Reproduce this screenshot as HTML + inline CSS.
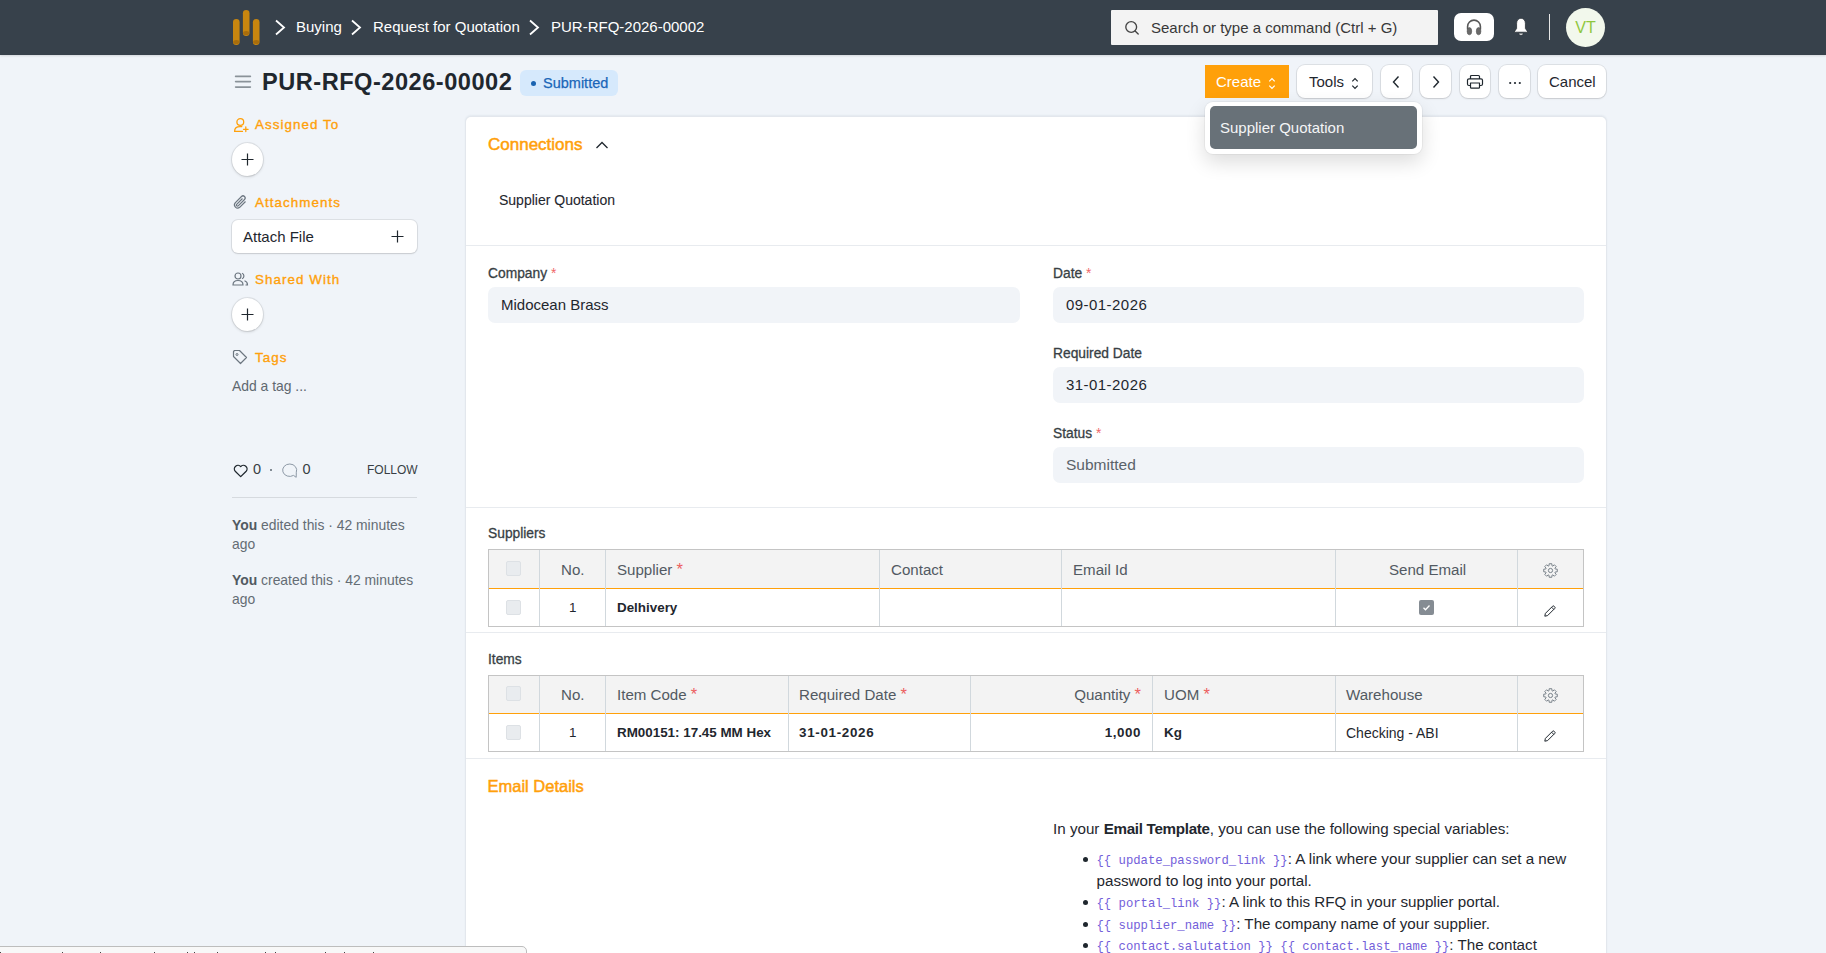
<!DOCTYPE html>
<html><head><meta charset="utf-8">
<style>
*{box-sizing:border-box;margin:0;padding:0}
html,body{width:1826px;height:953px;overflow:hidden}
body{background:#f0f4f9;font-family:"Liberation Sans",sans-serif;color:#1f272e;position:relative;font-size:13px}
.abs{position:absolute}
.nav{left:0;top:0;width:1826px;height:55px;background:#37414b;box-shadow:0 1px 2px rgba(0,0,0,.12)}
.crumb{color:#fff;font-size:15px;top:18px;white-space:nowrap}
.search{left:1111px;top:10px;width:327px;height:35px;background:#f3f3f3;border-radius:1px}
.search span{position:absolute;left:40px;top:9px;font-size:15px;color:#383838}
.btn{position:absolute;background:#fff;border-radius:8px;box-shadow:0 0 0 1px rgba(0,0,0,.08),0 1px 2px rgba(0,0,0,.1);font-size:14px;color:#1f272e;text-align:center}
.side-h{font-size:13.4px;color:#ffa00a;letter-spacing:1.05px;left:255px;white-space:nowrap;-webkit-text-stroke:.35px #ffa00a}
.circ{position:absolute;width:31px;height:33px;border-radius:50%;background:#fff;box-shadow:0 0 0 1px rgba(0,0,0,.07),0 1px 3px rgba(0,0,0,.15)}
.card{left:466px;top:117px;width:1140px;height:900px;background:#fff;border-radius:5px;box-shadow:0 0 0 1px #e3e7ed,0 -1px 2px 1px rgba(40,60,90,.06)}
.lbl{font-size:13.8px;color:#383f45;white-space:nowrap;-webkit-text-stroke:.3px #383f45}
.lbl .req{-webkit-text-stroke:0;color:#f06868}
.th1{font-size:15.1px;color:#525a62}
.td1{font-size:13.4px;color:#1f272e}
.b{font-weight:bold}
.dt{color:#5a6269;letter-spacing:.45px}
.req{color:#ec5f5f}
.th1 .req{font-size:16.5px;position:relative;top:0px;line-height:0}
.inp{position:absolute;background:#f1f4f8;border-radius:7px;height:36px;font-size:15px;color:#1f272e;padding:9px 13px;white-space:nowrap}
.hr{position:absolute;left:466px;width:1140px;height:1px;background:#e8ebef}
.tbl{position:absolute;left:488px;width:1096px;border:1px solid #c8cbce;border-radius:0}
.th{position:absolute;top:0;height:38px;background:#f3f3f3}
.cell{position:absolute;white-space:nowrap}
.vl{position:absolute;width:1px;background:#d1d8dd}
code{font-family:"Liberation Mono",monospace;font-size:12.25px;color:#7360da;line-height:0}
.bul{position:absolute;left:30px;top:9px;width:5px;height:5px;border-radius:50%;background:#1f272e}
.cb{position:absolute;width:15px;height:15px;background:#e9ecef;border:1px solid #dde1e5;border-radius:2px}
</style></head><body>
<!-- navbar -->
<div class="abs nav"></div>
<svg class="abs" style="left:232px;top:9px" width="30" height="38" viewBox="0 0 30 38">
<rect x="1" y="10" width="6.6" height="26" rx="3.3" fill="#c8860f"/><ellipse cx="4.3" cy="33" rx="3.1" ry="2" fill="#a86d0c"/>
<rect x="10.9" y="1" width="6.6" height="26" rx="3.3" fill="#c8860f"/><ellipse cx="14.2" cy="24" rx="3.1" ry="2" fill="#a86d0c"/>
<rect x="20.9" y="10" width="6.6" height="26" rx="3.3" fill="#c8860f"/><ellipse cx="24.2" cy="33" rx="3.1" ry="2" fill="#a86d0c"/>
</svg>
<svg class="abs" style="left:273.5px;top:19px" width="12" height="17" viewBox="0 0 12 17"><path d="M2 1.5 L10 8.5 L2 15.5" stroke="#fff" stroke-width="1.8" fill="none"/></svg>
<div class="abs crumb" style="left:296px">Buying</div>
<svg class="abs" style="left:350px;top:19px" width="12" height="17" viewBox="0 0 12 17"><path d="M2 1.5 L10 8.5 L2 15.5" stroke="#fff" stroke-width="1.8" fill="none"/></svg>
<div class="abs crumb" style="left:373px">Request for Quotation</div>
<svg class="abs" style="left:528px;top:19px" width="12" height="17" viewBox="0 0 12 17"><path d="M2 1.5 L10 8.5 L2 15.5" stroke="#fff" stroke-width="1.8" fill="none"/></svg>
<div class="abs crumb" style="left:551px">PUR-RFQ-2026-00002</div>
<div class="abs search">
<svg class="abs" style="left:13px;top:10px" width="16" height="16" viewBox="0 0 16 16"><circle cx="7.2" cy="7" r="5.4" stroke="#444" stroke-width="1.35" fill="none"/><path d="M11.1 10.9 L14.2 14" stroke="#444" stroke-width="1.35" stroke-linecap="round"/></svg>
<span>Search or type a command (Ctrl + G)</span></div>
<div class="abs" style="left:1454px;top:13px;width:40px;height:28px;background:#fff;border-radius:7px"></div>
<svg class="abs" style="left:1464px;top:17px" width="20" height="20" viewBox="0 0 20 20"><path d="M3.6 12.5 V9.5 a6.4 6.4 0 0 1 12.8 0 V12.5" stroke="#585858" stroke-width="1.6" fill="none"/><ellipse cx="5.4" cy="14.2" rx="2.3" ry="3.6" fill="#6a6a6a" stroke="#555" stroke-width=".6"/><ellipse cx="14.6" cy="14.2" rx="2.3" ry="3.6" fill="#6a6a6a" stroke="#555" stroke-width=".6"/></svg>
<svg class="abs" style="left:1512px;top:17px" width="18" height="20" viewBox="0 0 18 20"><path d="M9 1.3 C6.3 1.3 4.6 3.6 4.6 6.5 V11.5 L2 15.2 H16 L13.4 11.5 V6.5 C13.4 3.6 11.7 1.3 9 1.3z" fill="#fff" stroke="#1d242b" stroke-width=".7" stroke-linejoin="round"/><path d="M6.8 16.3 h4.4 a2.2 1.9 0 0 1 -4.4 0z" fill="#fff" stroke="#1d242b" stroke-width=".5"/></svg>
<div class="abs" style="left:1549px;top:14px;width:1px;height:26px;background:#e6e6e6"></div>
<div class="abs" style="left:1566px;top:8px;width:39px;height:39px;border-radius:50%;background:#f2f8ec;color:#8fc73e;font-size:16px;text-align:center;line-height:39px">VT</div>

<!-- page head -->
<svg class="abs" style="left:233px;top:75px" width="20" height="14" viewBox="0 0 20 14"><path d="M2.6 1.4H17.4M2.6 6.6H17.4M2.6 12.1H17.4" stroke="#8a9299" stroke-width="1.6" stroke-linecap="round"/></svg>
<div class="abs" style="left:262px;top:68.5px;font-size:23.6px;letter-spacing:.5px;font-weight:bold;color:#1f272e;white-space:nowrap">PUR-RFQ-2026-00002</div>
<div class="abs" style="left:520px;top:70px;width:98px;height:26px;background:#d6e9fc;border-radius:6px"></div>
<div class="abs" style="left:531px;top:80.5px;width:5px;height:5px;border-radius:50%;background:#1a63b0"></div>
<div class="abs" style="left:543px;top:75px;font-size:14.5px;color:#1a66b8;white-space:nowrap;-webkit-text-stroke:.25px #1a66b8">Submitted</div>

<div class="abs" style="left:1205px;top:65px;width:84px;height:33px;background:#ffa00a;color:#fff;font-size:14px"><span class="abs" style="left:11px;top:8px;font-size:15px">Create</span>
<svg class="abs" style="left:63px;top:12px" width="8" height="13" viewBox="0 0 8 13"><path d="M1.3 4.3 L4 1.5 L6.7 4.3 M1.3 8.7 L4 11.5 L6.7 8.7" stroke="#fff" stroke-width="1.2" fill="none"/></svg></div>
<div class="btn" style="left:1297px;top:65px;width:75px;height:33px"><span class="abs" style="left:12px;top:8px;font-size:15px">Tools</span>
<svg class="abs" style="left:54px;top:12px" width="8" height="13" viewBox="0 0 8 13"><path d="M1.3 4.3 L4 1.5 L6.7 4.3 M1.3 8.7 L4 11.5 L6.7 8.7" stroke="#1f272e" stroke-width="1.2" fill="none"/></svg></div>
<div class="btn" style="left:1381px;top:65px;width:31px;height:33px"><svg class="abs" style="left:10px;top:10px" width="10" height="14" viewBox="0 0 10 14"><path d="M7.5 1.5 L2.5 7 L7.5 12.5" stroke="#1f272e" stroke-width="1.4" fill="none"/></svg></div>
<div class="btn" style="left:1420px;top:65px;width:31px;height:33px"><svg class="abs" style="left:11px;top:10px" width="10" height="14" viewBox="0 0 10 14"><path d="M2.5 1.5 L7.5 7 L2.5 12.5" stroke="#1f272e" stroke-width="1.4" fill="none"/></svg></div>
<div class="btn" style="left:1460px;top:65px;width:30px;height:33px"><svg class="abs" style="left:6px;top:9px" width="18" height="16" viewBox="0 0 18 16"><path d="M4.5 4.8V2.5a1 1 0 0 1 1-1h7a1 1 0 0 1 1 1v2.3M4.5 11.5H3a1.5 1.5 0 0 1-1.5-1.5V6.3a1.5 1.5 0 0 1 1.5-1.5h12a1.5 1.5 0 0 1 1.5 1.5V10a1.5 1.5 0 0 1-1.5 1.5h-1.5M4.5 9h9v4.2a1 1 0 0 1-1 1h-7a1 1 0 0 1-1-1z" stroke="#1f272e" stroke-width="1.2" fill="none" stroke-linejoin="round"/></svg></div>
<div class="btn" style="left:1499px;top:65px;width:31px;height:33px"><svg class="abs" style="left:9px;top:16px" width="14" height="4" viewBox="0 0 14 4"><circle cx="2.2" cy="2" r="1.1" fill="#1f272e"/><circle cx="7" cy="2" r="1.1" fill="#1f272e"/><circle cx="11.8" cy="2" r="1.1" fill="#1f272e"/></svg></div>
<div class="btn" style="left:1538px;top:65px;width:68px;height:33px"><span class="abs" style="left:11px;top:8px;font-size:15px">Cancel</span></div>

<!-- sidebar -->
<svg class="abs" style="left:232px;top:116px" width="18" height="18" viewBox="0 0 18 18"><circle cx="8.3" cy="6" r="3.4" stroke="#ffa00a" stroke-width="1.3" fill="none"/><path d="M10.5 15.4H2.6C2.6 12.4 4.8 10.6 8 10.6H9.8M13.8 11v4.6M11.5 13.3h4.6" stroke="#ffa00a" stroke-width="1.3" fill="none" stroke-linecap="round" stroke-linejoin="round"/></svg>
<div class="abs side-h" style="top:117px">Assigned To</div>
<div class="circ" style="left:231.5px;top:143px"><svg class="abs" style="left:8px;top:9px" width="15" height="15" viewBox="0 0 15 15"><path d="M7.5 1.5v12M1.5 7.5h12" stroke="#1f272e" stroke-width="1.2"/></svg></div>
<svg class="abs" style="left:232px;top:194px" width="16" height="16" viewBox="0 0 16 16"><path d="M13.5 7.5l-5.8 5.8a3.2 3.2 0 0 1-4.5-4.5l6.3-6.3a2.1 2.1 0 0 1 3 3L6.2 11.8a1 1 0 0 1-1.5-1.5L10.5 4.5" stroke="#6c7680" stroke-width="1.2" fill="none"/></svg>
<div class="abs side-h" style="top:195px">Attachments</div>
<div class="abs" style="left:232px;top:220px;width:185px;height:33px;background:#fff;border-radius:6px;box-shadow:0 0 0 1px rgba(0,0,0,.08),0 1px 2px rgba(0,0,0,.1)"><span class="abs" style="left:11px;top:8px;font-size:15px">Attach File</span>
<svg class="abs" style="left:158px;top:9px" width="15" height="15" viewBox="0 0 15 15"><path d="M7.5 1.5v12M1.5 7.5h12" stroke="#1f272e" stroke-width="1.2"/></svg></div>
<svg class="abs" style="left:232px;top:271px" width="17" height="16" viewBox="0 0 17 16"><circle cx="6" cy="5" r="3" stroke="#6c7680" stroke-width="1.2" fill="none"/><path d="M1 14c0-2.8 2.2-4.5 5-4.5s5 1.7 5 4.5zM10 2.2a3 3 0 0 1 0 5.6M12.5 9.8c1.8.6 3 2 3 4.2h-2" stroke="#6c7680" stroke-width="1.2" fill="none"/></svg>
<div class="abs side-h" style="top:272px">Shared With</div>
<div class="circ" style="left:231.5px;top:298px"><svg class="abs" style="left:8px;top:9px" width="15" height="15" viewBox="0 0 15 15"><path d="M7.5 1.5v12M1.5 7.5h12" stroke="#1f272e" stroke-width="1.2"/></svg></div>
<svg class="abs" style="left:232px;top:349px" width="16" height="16" viewBox="0 0 16 16"><path d="M1.5 2.5v5l7 7 6-6-7-7h-5z" stroke="#6c7680" stroke-width="1.2" fill="none" stroke-linejoin="round"/><circle cx="5" cy="5.5" r="1" stroke="#6c7680" stroke-width="1" fill="none"/></svg>
<div class="abs side-h" style="top:350px">Tags</div>
<div class="abs" style="left:232px;top:378px;font-size:13.9px;color:#5f6870">Add a tag ...</div>

<svg class="abs" style="left:232px;top:462px" width="18" height="17" viewBox="0 0 18 17"><path d="M8.7 14.6 L3.2 9.2 A3.4 3.4 0 0 1 8.7 4.6 A3.4 3.4 0 0 1 14.2 9.2 Z" stroke="#1f272e" stroke-width="1.3" fill="none" stroke-linejoin="round"/></svg>
<div class="abs" style="left:253px;top:461px;font-size:14.5px;color:#383f45">0</div>
<div class="abs" style="left:270px;top:469px;width:1.6px;height:1.6px;border-radius:50%;background:#6c7680"></div>
<svg class="abs" style="left:282px;top:462px" width="18" height="17" viewBox="0 0 18 17"><path d="M11.5 13.4 A7 6.2 0 1 1 14.3 10.2 L14.2 15.3 Z" stroke="#8d99a6" stroke-width="1" fill="none" stroke-linejoin="round"/></svg>
<div class="abs" style="left:302.5px;top:461px;font-size:14.5px;color:#383f45">0</div>
<div class="abs" style="left:367px;top:463px;font-size:12px;color:#383f45">FOLLOW</div>
<div class="abs" style="left:232px;top:497px;width:185px;height:1px;background:#d6dadf"></div>
<div class="abs" style="left:232px;top:515.5px;width:186px;font-size:13.9px;color:#646c74;line-height:19.8px"><b style="color:#525a62">You</b> edited this · 42 minutes ago</div>
<div class="abs" style="left:232px;top:570.5px;width:186px;font-size:13.9px;color:#646c74;line-height:19.8px"><b style="color:#525a62">You</b> created this · 42 minutes ago</div>

<!-- card -->
<div class="abs card"></div>
<div class="abs" style="left:488px;top:135px;font-size:17px;color:#ffa00a;-webkit-text-stroke:.5px #ffa00a;white-space:nowrap">Connections</div>
<svg class="abs" style="left:595px;top:139px" width="14" height="12" viewBox="0 0 14 12"><path d="M1.5 9 L7 3.5 L12.5 9" stroke="#1f272e" stroke-width="1.3" fill="none"/></svg>
<div class="abs" style="left:499px;top:192px;font-size:14px;color:#1f272e;-webkit-text-stroke:.1px #1f272e;white-space:nowrap">Supplier Quotation</div>
<div class="hr" style="top:245px"></div>

<div class="abs lbl" style="left:488px;top:265.5px">Company <span class="req">*</span></div>
<div class="inp" style="left:488px;top:287px;width:532px">Midocean Brass</div>
<div class="abs lbl" style="left:1053px;top:265.5px">Date <span class="req">*</span></div>
<div class="inp dt" style="left:1053px;top:287px;width:531px">09-01-2026</div>
<div class="abs lbl" style="left:1053px;top:345.5px">Required Date</div>
<div class="inp dt" style="left:1053px;top:367px;width:531px">31-01-2026</div>
<div class="abs lbl" style="left:1053px;top:425.5px">Status <span class="req">*</span></div>
<div class="inp" style="left:1053px;top:447px;width:531px;color:#5a6269;font-size:15.5px">Submitted</div>
<div class="hr" style="top:507px"></div>

<div class="abs lbl" style="left:488px;top:525.5px">Suppliers</div>
<!-- suppliers table -->
<div class="abs" style="left:488px;top:549px;width:1096px;height:78px;border:1px solid #c4c4c4;background:#fff"></div>
<div class="abs" style="left:489px;top:550px;width:1094px;height:38px;background:#f3f3f3"></div>
<div class="abs" style="left:489px;top:588px;width:1094px;height:1px;background:#ffa00a"></div>
<div class="vl" style="left:539px;top:550px;height:76px"></div>
<div class="vl" style="left:605px;top:550px;height:76px"></div>
<div class="vl" style="left:879px;top:550px;height:76px"></div>
<div class="vl" style="left:1061px;top:550px;height:76px"></div>
<div class="vl" style="left:1335px;top:550px;height:76px"></div>
<div class="vl" style="left:1517px;top:550px;height:76px"></div>
<div class="cb" style="left:506px;top:561px"></div>
<div class="cb" style="left:506px;top:600px"></div>
<div class="cell th1" style="left:561px;top:561px">No.</div>
<div class="cell th1" style="left:617px;top:561px">Supplier <span class="req">*</span></div>
<div class="cell th1" style="left:891px;top:561px">Contact</div>
<div class="cell th1" style="left:1073px;top:561px">Email Id</div>
<div class="cell th1" style="left:1389px;top:561px">Send Email</div>
<div class="cell td1" style="left:569px;top:600px">1</div>
<div class="cell td1 b" style="left:617px;top:600px">Delhivery</div>
<div class="abs" style="left:1419px;top:600px;width:15px;height:15px;background:#858c93;border-radius:2px"><svg class="abs" style="left:2px;top:2px" width="11" height="11" viewBox="0 0 11 11"><path d="M2.5 5.8 L4.5 7.8 L8.5 3.5" stroke="#fff" stroke-width="1.3" fill="none"/></svg></div>
<svg class="abs" style="left:1542px;top:562px" width="17" height="17" viewBox="0 0 17 17"><path d="M13.28 7.04 L15.27 7.18 L15.27 9.82 L13.28 9.96 L12.91 10.85 L14.22 12.36 L12.36 14.22 L10.85 12.91 L9.96 13.28 L9.82 15.27 L7.18 15.27 L7.04 13.28 L6.15 12.91 L4.64 14.22 L2.78 12.36 L4.09 10.85 L3.72 9.96 L1.73 9.82 L1.73 7.18 L3.72 7.04 L4.09 6.15 L2.78 4.64 L4.64 2.78 L6.15 4.09 L7.04 3.72 L7.18 1.73 L9.82 1.73 L9.96 3.72 L10.85 4.09 L12.36 2.78 L14.22 4.64 L12.91 6.15Z" stroke="#737c85" stroke-width=".95" fill="none" stroke-linejoin="round"/><circle cx="8.5" cy="8.5" r="2.1" stroke="#737c85" stroke-width=".95" fill="none"/></svg>
<svg class="abs" style="left:1543px;top:604px" width="14" height="14" viewBox="0 0 14 14"><path d="M1.8 12.2l.6-2.8L9.6 2.2a1 1 0 0 1 1.4 0l.8.8a1 1 0 0 1 0 1.4L4.6 11.6z M8.6 3.2l2.2 2.2" stroke="#1f272e" stroke-width="1" fill="none" stroke-linejoin="round"/></svg>
<div class="hr" style="top:632px"></div>

<div class="abs lbl" style="left:488px;top:651.5px">Items</div>
<!-- items table -->
<div class="abs" style="left:488px;top:675px;width:1096px;height:77px;border:1px solid #c4c4c4;background:#fff"></div>
<div class="abs" style="left:489px;top:676px;width:1094px;height:37px;background:#f3f3f3"></div>
<div class="abs" style="left:489px;top:713px;width:1094px;height:1px;background:#ffa00a"></div>
<div class="vl" style="left:539px;top:676px;height:75px"></div>
<div class="vl" style="left:605px;top:676px;height:75px"></div>
<div class="vl" style="left:788px;top:676px;height:75px"></div>
<div class="vl" style="left:970px;top:676px;height:75px"></div>
<div class="vl" style="left:1152px;top:676px;height:75px"></div>
<div class="vl" style="left:1335px;top:676px;height:75px"></div>
<div class="vl" style="left:1517px;top:676px;height:75px"></div>
<div class="cb" style="left:506px;top:686px"></div>
<div class="cb" style="left:506px;top:725px"></div>
<div class="cell th1" style="left:561px;top:686px">No.</div>
<div class="cell th1" style="left:617px;top:686px">Item Code <span class="req">*</span></div>
<div class="cell th1" style="left:799px;top:686px">Required Date <span class="req">*</span></div>
<div class="cell th1" style="left:990px;top:686px;width:151px;text-align:right">Quantity <span class="req">*</span></div>
<div class="cell th1" style="left:1164px;top:686px">UOM <span class="req">*</span></div>
<div class="cell th1" style="left:1346px;top:686px">Warehouse</div>
<div class="cell td1" style="left:569px;top:725px">1</div>
<div class="cell td1 b" style="left:617px;top:725px">RM00151: 17.45 MM Hex</div>
<div class="cell td1 b" style="left:799px;top:725px;letter-spacing:.69px">31-01-2026</div>
<div class="cell td1 b" style="left:990px;top:725px;width:151px;text-align:right;letter-spacing:.56px">1,000</div>
<div class="cell td1 b" style="left:1164px;top:725px">Kg</div>
<div class="cell td1" style="left:1346px;top:725px;font-size:14px">Checking - ABI</div>
<svg class="abs" style="left:1542px;top:687px" width="17" height="17" viewBox="0 0 17 17"><path d="M13.28 7.04 L15.27 7.18 L15.27 9.82 L13.28 9.96 L12.91 10.85 L14.22 12.36 L12.36 14.22 L10.85 12.91 L9.96 13.28 L9.82 15.27 L7.18 15.27 L7.04 13.28 L6.15 12.91 L4.64 14.22 L2.78 12.36 L4.09 10.85 L3.72 9.96 L1.73 9.82 L1.73 7.18 L3.72 7.04 L4.09 6.15 L2.78 4.64 L4.64 2.78 L6.15 4.09 L7.04 3.72 L7.18 1.73 L9.82 1.73 L9.96 3.72 L10.85 4.09 L12.36 2.78 L14.22 4.64 L12.91 6.15Z" stroke="#737c85" stroke-width=".95" fill="none" stroke-linejoin="round"/><circle cx="8.5" cy="8.5" r="2.1" stroke="#737c85" stroke-width=".95" fill="none"/></svg>
<svg class="abs" style="left:1543px;top:729px" width="14" height="14" viewBox="0 0 14 14"><path d="M1.8 12.2l.6-2.8L9.6 2.2a1 1 0 0 1 1.4 0l.8.8a1 1 0 0 1 0 1.4L4.6 11.6z M8.6 3.2l2.2 2.2" stroke="#1f272e" stroke-width="1" fill="none" stroke-linejoin="round"/></svg>
<div class="hr" style="top:758px"></div>

<div class="abs" style="left:487.5px;top:776.5px;font-size:16.5px;color:#ffa00a;-webkit-text-stroke:.5px #ffa00a;white-space:nowrap">Email Details</div>
<div class="abs" style="left:1053px;top:820px;font-size:15.2px;color:#1f272e;white-space:nowrap">In your <b style="letter-spacing:-.3px">Email Template</b>, you can use the following special variables:</div>
<div class="abs" style="left:1053px;top:848px;width:560px;font-size:15.2px;color:#1f272e;line-height:21.5px">
<div style="position:relative;padding-left:43.5px;width:525px"><span class="bul"></span><code>{{ update_password_link }}</code>: A link where your supplier can set a new password to log into your portal.</div>
<div style="position:relative;padding-left:43.5px"><span class="bul"></span><code>{{ portal_link }}</code>: A link to this RFQ in your supplier portal.</div>
<div style="position:relative;padding-left:43.5px"><span class="bul"></span><code>{{ supplier_name }}</code>: The company name of your supplier.</div>
<div style="position:relative;padding-left:43.5px;width:525px"><span class="bul"></span><code>{{ contact.salutation }} {{ contact.last_name }}</code>: The contact person's (formal) salutation followed by their last name.</div>
</div>

<!-- dropdown -->
<div class="abs" style="left:1205px;top:102px;width:217px;height:52px;background:#fff;border-radius:8px;box-shadow:0 0 0 1px rgba(0,0,0,.04),0 8px 20px rgba(0,0,0,.14)"></div>
<div class="abs" style="left:1210px;top:106px;width:207px;height:43px;background:#687178;border-radius:5px"></div>
<div class="abs" style="left:1220px;top:119px;font-size:15px;color:#f4f5f6;white-space:nowrap">Supplier Quotation</div>

<!-- status bar -->
<div class="abs" style="left:-2px;top:946px;width:529px;height:20px;background:#f8f8f8;border:1px solid #bdbdbd;border-radius:0 5px 0 0"></div>
<div class="abs" style="left:0;top:951px;width:380px;height:2px"><i style="position:absolute;left:0px;top:.5px;width:1.2px;height:1.5px;background:#444"></i><i style="position:absolute;left:62px;top:.5px;width:1.2px;height:1.5px;background:#444"></i><i style="position:absolute;left:100px;top:.5px;width:1.2px;height:1.5px;background:#444"></i><i style="position:absolute;left:154px;top:.5px;width:1.2px;height:1.5px;background:#444"></i><i style="position:absolute;left:187px;top:.5px;width:1.2px;height:1.5px;background:#444"></i><i style="position:absolute;left:194px;top:.5px;width:1.2px;height:1.5px;background:#444"></i><i style="position:absolute;left:217px;top:.5px;width:1.2px;height:1.5px;background:#444"></i><i style="position:absolute;left:265px;top:.5px;width:1.2px;height:1.5px;background:#444"></i><i style="position:absolute;left:275px;top:.5px;width:1.2px;height:1.5px;background:#444"></i><i style="position:absolute;left:325px;top:.5px;width:1.2px;height:1.5px;background:#444"></i><i style="position:absolute;left:344px;top:.5px;width:1.2px;height:1.5px;background:#444"></i><i style="position:absolute;left:373px;top:.5px;width:1.2px;height:1.5px;background:#444"></i></div>
</body></html>
